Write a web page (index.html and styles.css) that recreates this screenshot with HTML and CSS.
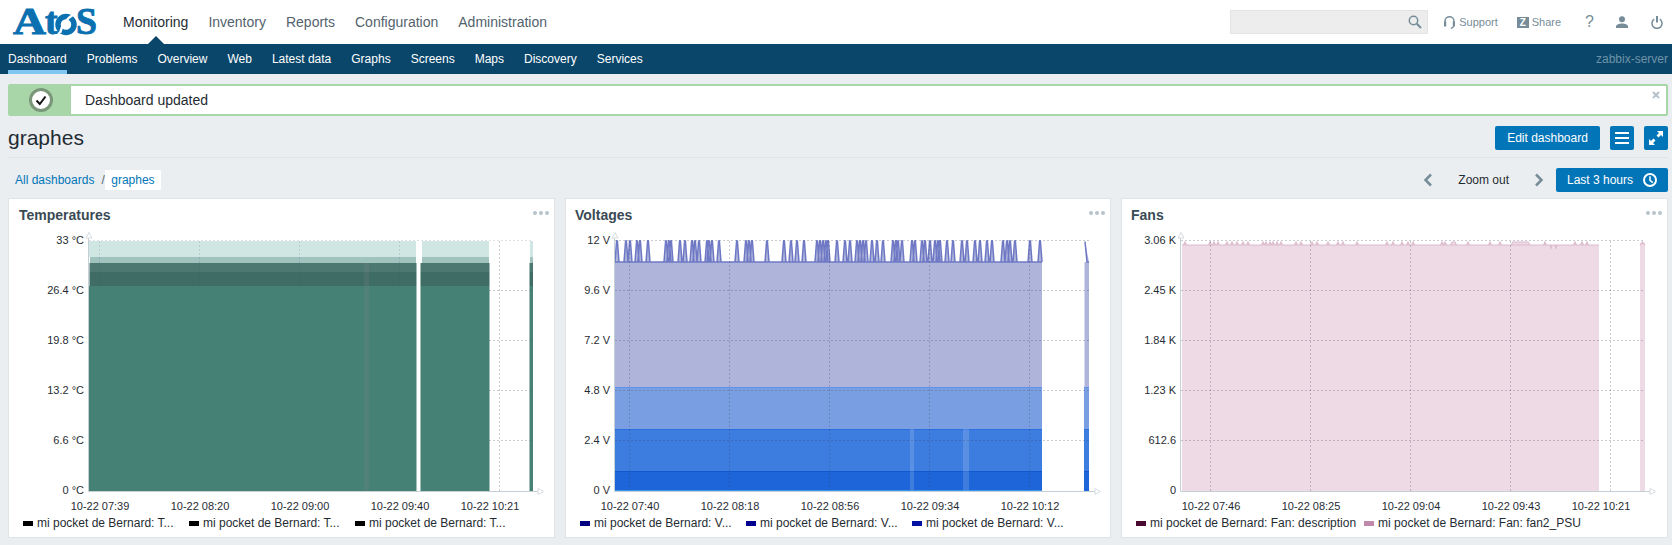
FILE: index.html
```html
<!DOCTYPE html>
<html lang="en">
<head>
    <meta charset="UTF-8">
    <title>graphes</title>
    <link rel="stylesheet" href="styles.css">
</head>
<body>
    <header class="top-bar">
        <svg class="logo" viewBox="0 0 112 44" width="112" height="44">
            <text class="logo-text" x="13" y="34" textLength="33" lengthAdjust="spacingAndGlyphs">A</text>
            <text class="logo-text" x="45" y="34">t</text>
            <circle class="logo-o" cx="66" cy="24.5" r="8"/>
            <path class="logo-cut" d="M60 33C62 25 66 19 74 14"/>
            <text class="logo-text" x="76" y="34" textLength="21" lengthAdjust="spacingAndGlyphs">S</text>
        </svg>
        <nav class="main-nav">
            <a class="active">Monitoring</a>
            <a>Inventory</a>
            <a>Reports</a>
            <a>Configuration</a>
            <a>Administration</a>
        </nav>
        <div class="search">
            <svg viewBox="0 0 14 14" width="14" height="14">
                <circle class="icon-line" cx="5.5" cy="5.5" r="4.2"/>
                <path class="icon-thick" d="M8.8 8.8L13 13"/>
            </svg>
        </div>
        <a class="tool support">
            <svg viewBox="0 0 11 13" width="11" height="13">
                <path class="icon-line" d="M1 7V5.2a4.5 4.5 0 0 1 9 0V7"/>
                <path class="icon-fill" d="M0 5.5h2.2v5H0zM8.8 5.5H11v5H8.8z"/>
                <path class="icon-line" d="M9.8 10.5L7 12.5"/>
            </svg>
            Support
        </a>
        <a class="tool share"><span class="z-box">Z</span>Share</a>
        <a class="tool help">?</a>
        <a class="tool user">
            <svg viewBox="0 0 12 12" width="12" height="12">
                <circle class="icon-fill" cx="6" cy="3.2" r="3"/>
                <path class="icon-fill" d="M0 12V10.5C0 8.5 3 7.5 6 7.5S12 8.5 12 10.5V12Z"/>
            </svg>
        </a>
        <a class="tool power">
            <svg viewBox="0 0 12 13" width="12" height="13">
                <path class="icon-line" d="M3.2 3.2a5 5 0 1 0 5.6 0"/>
                <path class="icon-thick" d="M6 0v6.5"/>
            </svg>
        </a>
    </header>

    <nav class="sub-nav">
        <a class="active">Dashboard</a>
        <a>Problems</a>
        <a>Overview</a>
        <a>Web</a>
        <a>Latest data</a>
        <a>Graphs</a>
        <a>Screens</a>
        <a>Maps</a>
        <a>Discovery</a>
        <a>Services</a>
        <span class="server-name">zabbix-server</span>
    </nav>

    <main>
        <div class="message">
            <div class="message-icon">
                <svg viewBox="0 0 26 26" width="26" height="26">
                    <circle class="check-ring" cx="13" cy="13" r="10.5"/>
                    <path class="check-mark" d="M8.5 13.5L11.8 17L17.5 9.5"/>
                </svg>
            </div>
            <span class="message-text">Dashboard updated</span>
            <svg class="message-close" viewBox="0 0 8 8" width="8" height="8">
                <path d="M1 1L7 7M7 1L1 7"/>
            </svg>
        </div>

        <div class="title-row">
            <h1>graphes</h1>
            <button class="btn edit-btn">Edit dashboard</button>
            <button class="btn icon-btn">
                <svg viewBox="0 0 14 12" width="14" height="12"><path class="btn-line" d="M0 1h14M0 6h14M0 11h14"/></svg>
            </button>
            <button class="btn icon-btn">
                <svg viewBox="0 0 14 14" width="14" height="14">
                    <path class="btn-fill" d="M8 0h6v6l-2-2-2.5 2.5-2-2L10 2zM6 14H0V8l2 2 2.5-2.5 2 2L4 12z"/>
                </svg>
            </button>
        </div>

        <div class="crumb-row">
            <div class="crumbs">
                <a>All dashboards</a>
                <span class="crumb-sep">/</span>
                <a class="crumb-current">graphes</a>
            </div>
            <svg class="chevron" viewBox="0 0 10 14" width="10" height="14"><path d="M8 1.5L2.5 7L8 12.5"/></svg>
            <span class="zoom-out">Zoom out</span>
            <svg class="chevron next" viewBox="0 0 10 14" width="10" height="14"><path d="M2 1.5L7.5 7L2 12.5"/></svg>
            <button class="btn time-btn">
                Last 3 hours
                <svg viewBox="0 0 14 14" width="14" height="14">
                    <circle class="btn-line" cx="7" cy="7" r="6"/>
                    <path class="btn-line thin" d="M7 3.2V7.3L9.8 9.6"/>
                </svg>
            </button>
        </div>

        <div class="widgets">
            <section class="widget">
                <div class="widget-head first">
                    <h2>Temperatures</h2>
                    <span class="dots"><i></i><i></i><i></i></span>
                </div>
                <svg class="chart" viewBox="9 230 545 285" width="545" height="285">
                    <path class="t-light" d="M89 241H416V257H89ZM422 241H489V257H422ZM530 241H533V257H530Z"/>
                    <path class="t-mid" d="M90 257H416V263H90ZM422 257H489V263H422ZM530 257H533V263H530Z"/>
                    <path class="t-dark" d="M89.5 263H416.5V272H89.5ZM420.5 263H489.5V272H420.5ZM529.5 263H533V272H529.5Z"/>
                    <path class="t-darker" d="M89.5 272H416.5V286H89.5ZM420.5 272H489.5V286H420.5ZM529.5 272H533V286H529.5Z"/>
                    <path class="grid soft" d="M89 240.5H533M99.5 241V286M199.5 241V286M299.5 241V286M399.5 241V286"/>
                    <path class="grid" d="M489 290.5H533M489 340.5H533M489 390.5H533M489 440.5H533M499.5 241V491"/>
                    <path class="t-main" d="M89 286H416.5V491H89ZM420.5 286H489.5V491H420.5ZM529.5 286H533V491H529.5Z"/>
                    <rect class="t-stripe" x="364" y="263" width="5" height="228"/>
                    <path class="axis" d="M88.5 238V491.5H538"/>
                    <path class="arrow" d="M89 232.5l-3 5.5h6zM538 488.5l5.5 3-5.5 3z"/>
                    <g class="y-labels">
                        <text x="84" y="244">33 °C</text>
                        <text x="84" y="294">26.4 °C</text>
                        <text x="84" y="344">19.8 °C</text>
                        <text x="84" y="394">13.2 °C</text>
                        <text x="84" y="444">6.6 °C</text>
                        <text x="84" y="494">0 °C</text>
                    </g>
                    <g class="x-labels">
                        <text x="100" y="510">10-22 07:39</text>
                        <text x="200" y="510">10-22 08:20</text>
                        <text x="300" y="510">10-22 09:00</text>
                        <text x="400" y="510">10-22 09:40</text>
                        <text x="490" y="510">10-22 10:21</text>
                    </g>
                </svg>
                <div class="legend">
                    <span class="legend-item short"><i class="swatch swatch-black"></i>mi pocket de Bernard: T...</span>
                    <span class="legend-item short"><i class="swatch swatch-black"></i>mi pocket de Bernard: T...</span>
                    <span class="legend-item short"><i class="swatch swatch-black"></i>mi pocket de Bernard: T...</span>
                </div>
            </section>

            <section class="widget">
                <div class="widget-head">
                    <h2>Voltages</h2>
                    <span class="dots"><i></i><i></i><i></i></span>
                </div>
                <svg class="chart" viewBox="566 230 544 285" width="544" height="285">
                    <path class="v-top" d="M615 262H1042V387H615ZM1084.5 262H1089V387H1084.5Z"/>
                    <path class="v-spikes" d="M615 262H1042M615 262l1.6-21h.8l1.6 21M624 262l1.6-21h.8l1.6 21M628 262l1.6-21h.8l1.6 21M635 262l1.6-21h.8l1.6 21M638 262l1.6-21h.8l1.6 21M646 262l1.6-21h.8l1.6 21M664 262l1.6-21h.8l1.6 21M667 262l1.6-21h.8l1.6 21M669 262l1.6-21h.8l1.6 21M678 262l1.6-21h.8l1.6 21M683 262l1.6-21h.8l1.6 21M690 262l1.6-21h.8l1.6 21M693 262l1.6-21h.8l1.6 21M697 262l1.6-21h.8l1.6 21M705 262l1.6-21h.8l1.6 21M707 262l1.6-21h.8l1.6 21M710 262l1.6-21h.8l1.6 21M717 262l1.6-21h.8l1.6 21M735 262l1.6-21h.8l1.6 21M744 262l1.6-21h.8l1.6 21M747 262l1.6-21h.8l1.6 21M750 262l1.6-21h.8l1.6 21M765 262l1.6-21h.8l1.6 21M782 262l1.6-21h.8l1.6 21M789 262l1.6-21h.8l1.6 21M795 262l1.6-21h.8l1.6 21M802 262l1.6-21h.8l1.6 21M815 262l1.6-21h.8l1.6 21M818 262l1.6-21h.8l1.6 21M821 262l1.6-21h.8l1.6 21M824 262l1.6-21h.8l1.6 21M826 262l1.6-21h.8l1.6 21M835 262l1.6-21h.8l1.6 21M843 262l1.6-21h.8l1.6 21M848 262l1.6-21h.8l1.6 21M855 262l1.6-21h.8l1.6 21M858 262l1.6-21h.8l1.6 21M861 262l1.6-21h.8l1.6 21M864 262l1.6-21h.8l1.6 21M870 262l1.6-21h.8l1.6 21M875 262l1.6-21h.8l1.6 21M881 262l1.6-21h.8l1.6 21M891 262l1.6-21h.8l1.6 21M894 262l1.6-21h.8l1.6 21M896 262l1.6-21h.8l1.6 21M900 262l1.6-21h.8l1.6 21M910 262l1.6-21h.8l1.6 21M913 262l1.6-21h.8l1.6 21M920 262l1.6-21h.8l1.6 21M923 262l1.6-21h.8l1.6 21M928 262l1.6-21h.8l1.6 21M933 262l1.6-21h.8l1.6 21M936 262l1.6-21h.8l1.6 21M938 262l1.6-21h.8l1.6 21M945 262l1.6-21h.8l1.6 21M951 262l1.6-21h.8l1.6 21M960 262l1.6-21h.8l1.6 21M965 262l1.6-21h.8l1.6 21M973 262l1.6-21h.8l1.6 21M978 262l1.6-21h.8l1.6 21M985 262l1.6-21h.8l1.6 21M990 262l1.6-21h.8l1.6 21M1001 262l1.6-21h.8l1.6 21M1005 262l1.6-21h.8l1.6 21M1008 262l1.6-21h.8l1.6 21M1013 262l1.6-21h.8l1.6 21M1028 262l1.6-21h.8l1.6 21M1038 262l1.6-21h.8l1.6 21M1085 241.5L1087 262H1089"/>
                    <path class="v-fill-2" d="M615 387H1042V429H615ZM1084 387H1089V429H1084Z"/>
                    <path class="v-fill-3" d="M615 429H1042V471H615ZM1084 429H1089V471H1084Z"/>
                    <path class="v-fill-4" d="M615 471H1042V491H615ZM1084 471H1089V491H1084Z"/>
                    <path class="v-edge-2" d="M615 387.5H1042M1084 387.5H1089"/>
                    <path class="v-edge-3" d="M615 429.5H1042M1084 429.5H1089"/>
                    <path class="v-edge-4" d="M615 471.5H1042M1084 471.5H1089"/>
                    <rect class="v-stripe" x="910" y="429" width="4" height="62"/>
                    <rect class="v-stripe" x="963" y="429" width="6" height="62"/>
                    <path class="grid" d="M615 240.5H1089M615 290.5H1089M615 340.5H1089M615 390.5H1089M615 440.5H1089M629.5 241V491M729.5 241V491M829.5 241V491M929.5 241V491M1029.5 241V491"/>
                    <path class="v-base" d="M615 491H1042"/>
                    <path class="axis" d="M614.5 238V491.5H1095"/>
                    <path class="arrow" d="M615 232.5l-3 5.5h6zM1095 488.5l5.5 3-5.5 3z"/>
                    <g class="y-labels">
                        <text x="610" y="244">12 V</text>
                        <text x="610" y="294">9.6 V</text>
                        <text x="610" y="344">7.2 V</text>
                        <text x="610" y="394">4.8 V</text>
                        <text x="610" y="444">2.4 V</text>
                        <text x="610" y="494">0 V</text>
                    </g>
                    <g class="x-labels">
                        <text x="630" y="510">10-22 07:40</text>
                        <text x="730" y="510">10-22 08:18</text>
                        <text x="830" y="510">10-22 08:56</text>
                        <text x="930" y="510">10-22 09:34</text>
                        <text x="1030" y="510">10-22 10:12</text>
                    </g>
                </svg>
                <div class="legend">
                    <span class="legend-item short"><i class="swatch swatch-navy"></i>mi pocket de Bernard: V...</span>
                    <span class="legend-item short"><i class="swatch swatch-navy2"></i>mi pocket de Bernard: V...</span>
                    <span class="legend-item short"><i class="swatch swatch-navy3"></i>mi pocket de Bernard: V...</span>
                </div>
            </section>

            <section class="widget">
                <div class="widget-head">
                    <h2>Fans</h2>
                    <span class="dots"><i></i><i></i><i></i></span>
                </div>
                <svg class="chart" viewBox="1122 230 545 285" width="545" height="285">
                    <path class="f-fill" d="M1182 245H1599V491H1182ZM1640 491V245L1642.5 242L1645 245V491Z"/>
                    <path class="f-line" d="M1182 245H1599M1183.5 245l1.5-3l1.5 3M1208.5 245l1.5-3l1.5 3M1212.5 245l1.5-3l1.5 3M1216.5 245l1.5-3l1.5 3M1225.5 245l1.5-3l1.5 3M1230.5 245l1.5-3l1.5 3M1235.5 245l1.5-3l1.5 3M1241.5 245l1.5-3l1.5 3M1246.5 245l1.5-3l1.5 3M1261.5 245l1.5-3l1.5 3M1264.5 245l1.5-3l1.5 3M1268.5 245l1.5-3l1.5 3M1271.5 245l1.5-3l1.5 3M1275.5 245l1.5-3l1.5 3M1279.5 245l1.5-3l1.5 3M1294.5 245l1.5-3l1.5 3M1299.5 245l1.5-3l1.5 3M1310.5 245l1.5-3l1.5 3M1315.5 245l1.5-3l1.5 3M1326.5 245l1.5-3l1.5 3M1336.5 245l1.5-3l1.5 3M1341.5 245l1.5-3l1.5 3M1355.5 245l1.5-3l1.5 3M1385.5 245l1.5-3l1.5 3M1391.5 245l1.5-3l1.5 3M1400.5 245l1.5-3l1.5 3M1406.5 245l1.5-3l1.5 3M1411.5 245l1.5-3l1.5 3M1440.5 245l1.5-3l1.5 3M1443.5 245l1.5-3l1.5 3M1450.5 245l1.5-3h3l1.5 3M1466.5 245l1.5-3l1.5 3M1488.5 245l1.5-3l1.5 3M1498.5 245l1.5-3l1.5 3M1511 245l2-3h15l2 3M1543.5 245l1.5-3l1.5 3M1550 245l1 3l1-3M1555 245l1 3l1-3M1573.5 245l1.5-3l1.5 3M1580.5 245l1.5-3l1.5 3M1585.5 245l1.5-3l1.5 3M1640 245L1642.5 242L1645 245"/>
                    <path class="grid" d="M1181 240.5H1645M1181 290.5H1645M1181 340.5H1645M1181 390.5H1645M1181 440.5H1645M1210.5 241V491M1310.5 241V491M1410.5 241V491M1510.5 241V491M1610.5 241V491"/>
                    <path class="axis" d="M1180.5 238V491.5H1650"/>
                    <path class="arrow" d="M1181 232.5l-3 5.5h6zM1650 488.5l5.5 3-5.5 3z"/>
                    <g class="y-labels">
                        <text x="1176" y="244">3.06 K</text>
                        <text x="1176" y="294">2.45 K</text>
                        <text x="1176" y="344">1.84 K</text>
                        <text x="1176" y="394">1.23 K</text>
                        <text x="1176" y="444">612.6</text>
                        <text x="1176" y="494">0</text>
                    </g>
                    <g class="x-labels">
                        <text x="1211" y="510">10-22 07:46</text>
                        <text x="1311" y="510">10-22 08:25</text>
                        <text x="1411" y="510">10-22 09:04</text>
                        <text x="1511" y="510">10-22 09:43</text>
                        <text x="1601" y="510">10-22 10:21</text>
                    </g>
                </svg>
                <div class="legend">
                    <span class="legend-item"><i class="swatch swatch-wine"></i>mi pocket de Bernard: Fan: description</span>
                    <span class="legend-item"><i class="swatch swatch-pink"></i>mi pocket de Bernard: Fan: fan2_PSU</span>
                </div>
            </section>
        </div>
    </main>
</body>
</html>
```

FILE: styles.css
```css
body {
    margin: 0;
    background-color: #ebeef0;
    color: #1f2c33;
    font-family: "Liberation Sans", Arial, sans-serif;
    font-size: 12px;
}

a {
    cursor: pointer;
}

svg {
    display: block;
}

/* top bar */
.top-bar {
    display: flex;
    align-items: center;
    height: 44px;
    padding-right: 9px;
    background-color: #fff;
}

.logo-text {
    font-family: "Liberation Serif", serif;
    font-weight: bold;
    font-size: 38px;
    fill: #0a70b0;
    stroke: #0a70b0;
    stroke-width: 0.9;
}

.logo-o {
    fill: none;
    stroke: #0a70b0;
    stroke-width: 5.5;
}

.logo-cut {
    fill: none;
    stroke: #fff;
    stroke-width: 2.5;
}

.main-nav {
    display: flex;
    gap: 20px;
    margin-left: 11px;
    font-size: 14px;
}

.main-nav a {
    position: relative;
    color: #53636d;
    line-height: 44px;
}

.main-nav a.active {
    color: #1f2c33;
}

.main-nav a.active::after {
    content: "";
    position: absolute;
    left: 50%;
    bottom: 0;
    margin-left: -8px;
    border-left: 8px solid transparent;
    border-right: 8px solid transparent;
    border-bottom: 8px solid #0a466a;
}

.search {
    display: flex;
    align-items: center;
    justify-content: flex-end;
    box-sizing: border-box;
    width: 198px;
    height: 24px;
    margin-left: auto;
    padding-right: 5px;
    background-color: #ededed;
    border: 1px solid #e3e3e3;
}

.icon-line {
    fill: none;
    stroke: #768d99;
    stroke-width: 1.5;
}

.icon-thick {
    fill: none;
    stroke: #768d99;
    stroke-width: 2;
}

.icon-fill {
    fill: #768d99;
}

.tool {
    display: flex;
    align-items: center;
    color: #768d99;
    font-size: 11px;
}

.support {
    gap: 4px;
    margin-left: 16px;
}

.share {
    margin-left: 19px;
}

.z-box {
    width: 12px;
    height: 11px;
    margin-right: 3px;
    background-color: #768d99;
    color: #fff;
    font-size: 10px;
    font-weight: bold;
    line-height: 11px;
    text-align: center;
}

.help {
    margin-left: 24px;
    font-size: 16px;
}

.user {
    margin-left: 22px;
}

.power {
    margin-left: 23px;
}

/* second level menu */
.sub-nav {
    display: flex;
    gap: 20px;
    height: 30px;
    padding: 0 4px 0 8px;
    background-color: #0a466a;
    line-height: 30px;
}

.sub-nav a {
    box-sizing: border-box;
    height: 30px;
    color: #fff;
}

.sub-nav a.active {
    border-bottom: 4px solid #7fc6f2;
}

.server-name {
    margin-left: auto;
    color: #6f93a8;
}

main {
    padding: 10px 4px 5px 8px;
}

/* message box */
.message {
    position: relative;
    display: flex;
    align-items: center;
    box-sizing: border-box;
    height: 32px;
    background-color: #fff;
    border: 2px solid #a9d6a9;
    border-radius: 2px;
}

.message-icon {
    display: flex;
    align-items: center;
    justify-content: center;
    width: 61px;
    height: 28px;
    background-color: #a9d6a9;
}

.check-ring {
    fill: #fff;
    stroke: #7a977a;
    stroke-width: 3;
}

.check-mark {
    fill: none;
    stroke: #111;
    stroke-width: 2;
}

.message-text {
    margin-left: 14px;
    font-size: 14px;
}

.message-close {
    position: absolute;
    top: 5px;
    right: 6px;
}

.message-close path {
    fill: none;
    stroke: #b5c2ca;
    stroke-width: 2;
}

/* title row */
.title-row {
    display: flex;
    align-items: center;
    padding: 10px 0 7px;
    border-bottom: 1px solid #dfe4e7;
}

h1 {
    margin: 0 auto 0 0;
    font-size: 21px;
    font-weight: normal;
    line-height: 24px;
}

.btn {
    height: 24px;
    padding: 0;
    background-color: #0275b8;
    border: 0;
    border-radius: 2px;
    color: #fff;
    font-family: inherit;
    font-size: 12px;
}

.edit-btn {
    width: 105px;
}

.icon-btn {
    display: flex;
    align-items: center;
    justify-content: center;
    width: 24px;
    margin-left: 10px;
}

.btn-line {
    fill: none;
    stroke: #fff;
    stroke-width: 2;
}

.btn-line.thin {
    stroke-width: 1.5;
}

.btn-fill {
    fill: #fff;
}

/* breadcrumbs and time controls */
.crumb-row {
    display: flex;
    align-items: center;
    height: 24px;
    margin: 10px 0 6px;
}

.crumbs {
    display: flex;
    align-items: center;
    margin-right: auto;
    padding-left: 7px;
    color: #0275b8;
}

.crumb-sep {
    margin: 0 0 0 7px;
    color: #53636d;
}

.crumb-current {
    height: 20px;
    padding: 0 6.5px;
    background-color: #fff;
    line-height: 20px;
}

.chevron path {
    fill: none;
    stroke: #768d99;
    stroke-width: 2.5;
}

.zoom-out {
    margin: 0 25px;
}

.chevron.next {
    margin-right: 12px;
}

.time-btn {
    display: flex;
    align-items: center;
    justify-content: space-between;
    box-sizing: border-box;
    width: 112px;
    padding: 0 11px;
}

/* dashboard widgets */
.widgets {
    display: grid;
    grid-template-columns: 547px 546px 547px;
    gap: 10px;
}

.widget {
    box-sizing: border-box;
    height: 340px;
    overflow: hidden;
    background-color: #fff;
    border: 1px solid #dfe4e7;
}

.widget-head {
    display: flex;
    align-items: center;
    justify-content: space-between;
    height: 31px;
    padding: 0 5px 0 9px;
}

.widget-head.first {
    padding-left: 10px;
}

h2 {
    margin: 0;
    color: #3a4a55;
    font-size: 14px;
    font-weight: bold;
}

.dots {
    display: flex;
    gap: 2px;
    margin-bottom: 4px;
}

.dots i {
    width: 4px;
    height: 4px;
    background-color: #b8c4cc;
    border-radius: 50%;
}

.legend {
    display: flex;
    padding-left: 14px;
    line-height: 16px;
}

.legend-item {
    display: flex;
    align-items: center;
    margin-right: 8px;
    color: #1f2c33;
    white-space: nowrap;
}

.legend-item.short {
    width: 166px;
    margin-right: 0;
}

.swatch {
    width: 10px;
    height: 5px;
    margin-right: 4px;
}

.swatch-black { background-color: #000; }
.swatch-navy { background-color: #000080; }
.swatch-navy2 { background-color: #000090; }
.swatch-navy3 { background-color: #0010a0; }
.swatch-wine { background-color: #4a0a30; }
.swatch-pink { background-color: #c088aa; }

/* chart parts */
.chart text {
    font-size: 11px;
    fill: #1f2c33;
}

.y-labels text {
    text-anchor: end;
}

.x-labels text {
    text-anchor: middle;
}

.grid {
    fill: none;
    stroke: rgba(60, 70, 90, 0.28);
    stroke-width: 1;
    stroke-dasharray: 2 2;
}

.grid.soft {
    stroke: rgba(60, 70, 90, 0.16);
}

.axis {
    fill: none;
    stroke: #c5d0d6;
    stroke-width: 1;
}

.arrow {
    fill: #fff;
    stroke: #d5dde1;
    stroke-width: 1;
}

.t-light { fill: #cfe6e2; }
.t-mid { fill: #a0c4bd; }
.t-dark { fill: #4d7871; }
.t-darker { fill: #3f6d66; }
.t-main { fill: #468175; }
.t-stripe { fill: rgba(128, 128, 128, 0.2); }

.v-top { fill: #afb5da; }

.v-spikes {
    fill: #afb5da;
    stroke: #6e78c4;
    stroke-width: 1.5;
}

.v-fill-2 { fill: #799fe2; }
.v-fill-3 { fill: #3d7de0; }
.v-fill-4 { fill: #1d65d8; }
.v-stripe { fill: rgba(255, 255, 255, 0.15); }

.v-edge-2 { stroke: #5e92ea; }
.v-edge-3 { stroke: #2b70de; }
.v-edge-4 { stroke: #1258cf; }

.v-base {
    stroke: #45a8f5;
    stroke-width: 1.5;
}

.f-fill { fill: #eddae4; }

.f-line {
    fill: #eddae4;
    stroke: #dcbccd;
    stroke-width: 1.2;
}
```
